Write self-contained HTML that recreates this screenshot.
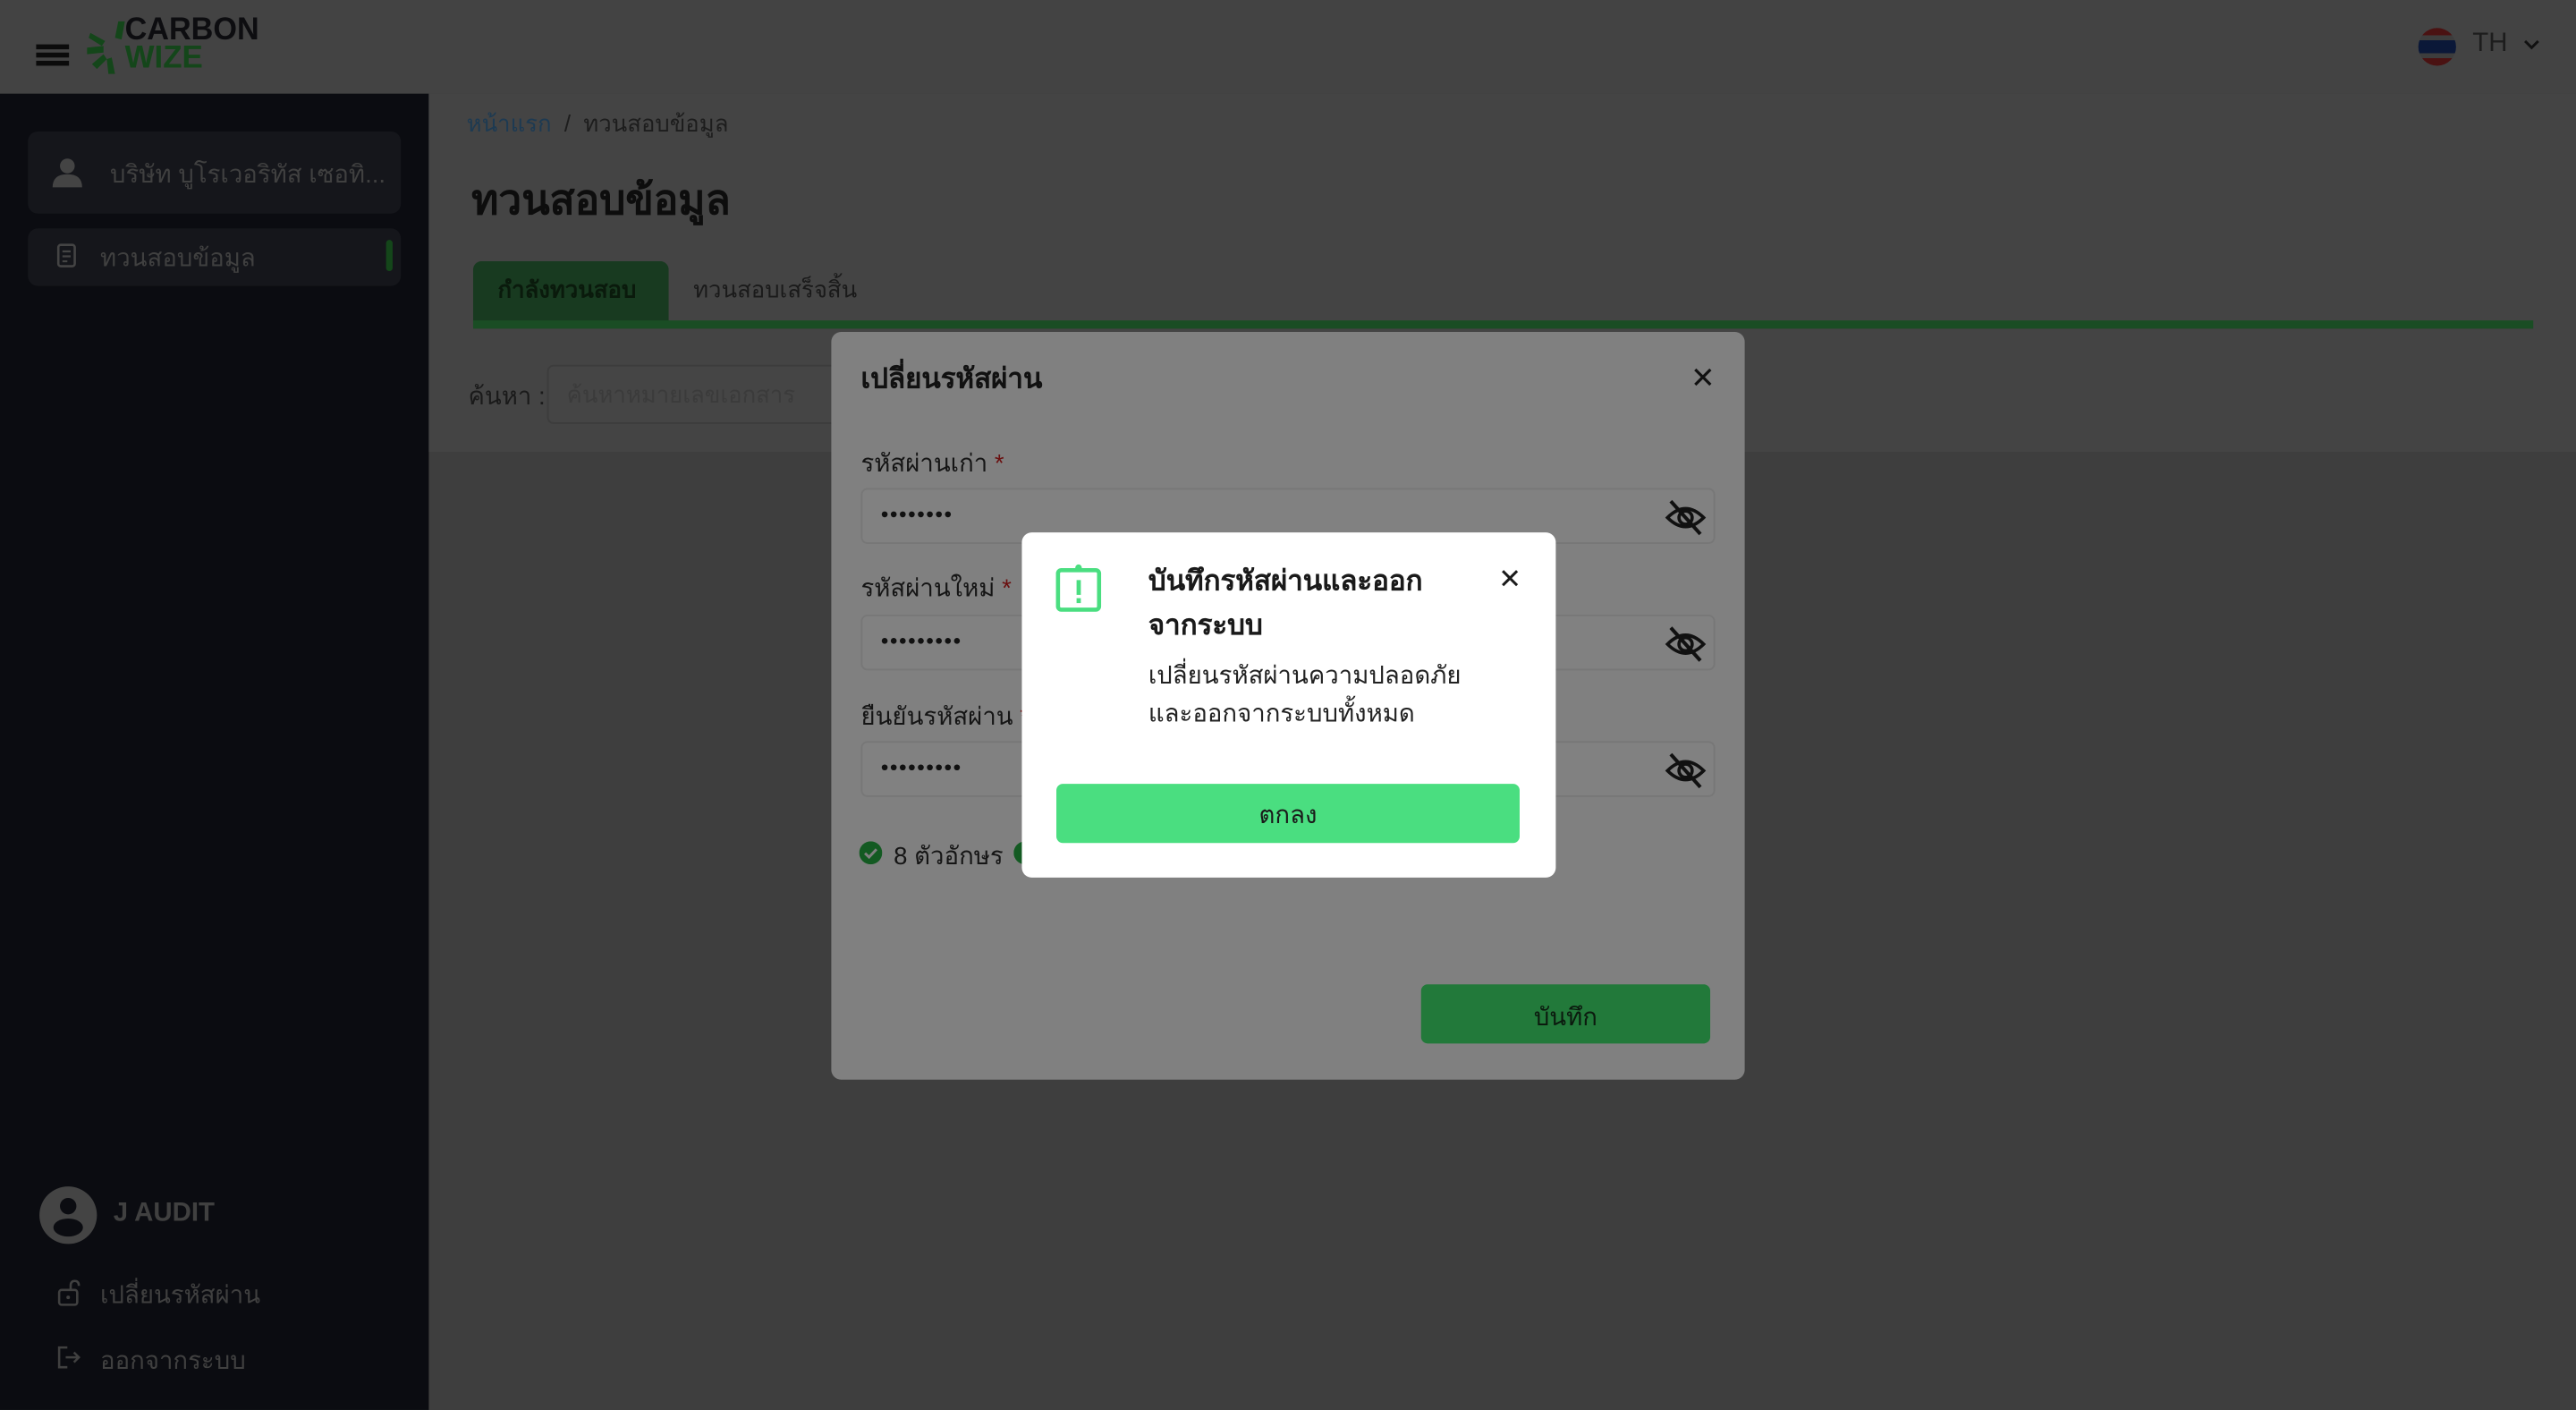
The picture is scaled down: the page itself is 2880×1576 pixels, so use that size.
<!DOCTYPE html>
<html><head><meta charset="utf-8">
<style>
*{box-sizing:border-box;margin:0;padding:0}
html,body{width:2880px;height:1576px;overflow:hidden;background:#404040}
#s{position:absolute;left:0;top:0;width:1568px;height:858px;transform:scale(1.836735);transform-origin:0 0;font-family:"Liberation Sans","Noto Sans CJK SC",sans-serif;background:#3e3e3e}
.a{position:absolute}
</style></head><body><div id="s">
<!-- header -->
<div class="a" style="left:0;top:0;width:1568px;height:57px;background:#434343"></div>
<div class="a" style="left:22px;top:27px;width:20px;height:2.5px;background:#0b0b0b;box-shadow:0 5px 0 #0b0b0b,0 10px 0 #0b0b0b"></div>
<svg class="a" style="left:52px;top:12px" width="26" height="34" viewBox="0 0 26 34"><g fill="#14461a"><path d="M18 11 L20 1 L24 1 L22 12 Z"/><path d="M1 17 L11 16 L11 20 L1 21 Z"/><path d="M3 8 L12 13 L10 16 L2 11 Z"/><path d="M4 27 L11 21 L13 24 L7 30 Z"/><path d="M13 24 L16 23 L18 33 L14 33 Z"/></g></svg>
<div class="a" style="left:76px;top:9px;font:bold 19px/20px 'Liberation Sans',sans-serif;color:#0d0d10;transform:scaleX(0.98);transform-origin:0 0">CARBON</div>
<div class="a" style="left:76px;top:26px;font:bold 19px/20px 'Liberation Sans',sans-serif;color:#14461a">WIZE</div>
<div class="a" style="left:1472px;top:17px;width:23px;height:23px;border-radius:50%;background:linear-gradient(#4a1212 0 20%,#3d3d3d 20% 33%,#0b1838 33% 67%,#3d3d3d 67% 80%,#4a1212 80%)"></div>
<div class="a" style="left:1505px;top:18px;font-size:16px;color:#1d1d1d">TH</div>
<svg class="a" style="left:1535px;top:23px" width="12" height="9"><path d="M2 2 L6 6 L10 2" stroke="#111" stroke-width="1.6" fill="none"/></svg>
<!-- sidebar -->
<div class="a" style="left:0;top:57px;width:261px;height:801px;background:#0b0c11"></div>
<div class="a" style="left:17px;top:80px;width:227px;height:50px;border-radius:6px;background:#15161b"></div>
<svg class="a" style="left:31px;top:95px" width="20" height="20"><circle cx="10" cy="6" r="4.5" fill="#444"/><path d="M1 19 Q1 11 10 11 Q19 11 19 19 Z" fill="#444"/></svg>
<div class="a" style="left:67px;top:94px;font-size:15px;color:#404040">บริษัท บูโรเวอริทัส เซอทิ...</div>
<div class="a" style="left:17px;top:139px;width:227px;height:35px;border-radius:6px;background:#15161b"></div>
<svg class="a" style="left:34px;top:148px" width="14" height="16"><rect x="1.5" y="1" width="10" height="13" rx="1.5" stroke="#444" stroke-width="1.4" fill="none"/><path d="M4 5 H9 M4 8 H9 M4 11 H7" stroke="#444" stroke-width="1.2"/></svg>
<div class="a" style="left:61px;top:145px;font-size:15px;color:#404040">ทวนสอบข้อมูล</div>
<div class="a" style="left:235px;top:146px;width:4px;height:19px;border-radius:2px;background:#14461a"></div>
<div class="a" style="left:24px;top:722px;width:35px;height:35px;border-radius:50%;background:#444"></div>
<svg class="a" style="left:24px;top:722px" width="35" height="35"><circle cx="17.5" cy="12" r="5" fill="#0b0c11"/><ellipse cx="17.5" cy="25" rx="9" ry="5.5" fill="#0b0c11"/></svg>
<div class="a" style="left:69px;top:729px;font:bold 16px/20px 'Liberation Sans',sans-serif;color:#404040">J AUDIT</div>
<svg class="a" style="left:34px;top:778px" width="16" height="18"><rect x="2" y="7" width="11" height="9" rx="1.5" stroke="#404040" stroke-width="1.4" fill="none"/><path d="M9 7 V4.5 Q9 1.5 11.5 1.5 Q14 1.5 14 4.5" stroke="#404040" stroke-width="1.4" fill="none"/><circle cx="7.5" cy="11.5" r="1.1" fill="#404040"/></svg>
<div class="a" style="left:61px;top:776px;font-size:15px;color:#404040">เปลี่ยนรหัสผ่าน</div>
<svg class="a" style="left:34px;top:818px" width="16" height="16"><path d="M7 2 H2 V14 H7 M6 8 H14 M11 5 L14 8 L11 11" stroke="#404040" stroke-width="1.4" fill="none"/></svg>
<div class="a" style="left:61px;top:816px;font-size:15px;color:#404040">ออกจากระบบ</div>
<!-- main -->
<div class="a" style="left:261px;top:57px;width:1307px;height:218px;background:#444"></div>
<div class="a" style="left:284px;top:65px;font-size:14px;color:#1d3a52">หน้าแรก <span style="color:#1d1d1d">&nbsp;/&nbsp; ทวนสอบข้อมูล</span></div>
<div class="a" style="left:287px;top:106px;font:bold 25px/32px 'Liberation Sans','Noto Sans CJK SC',sans-serif;color:#0d0d0d">ทวนสอบข้อมูล</div>
<div class="a" style="left:288px;top:159px;width:119px;height:40px;border-radius:5px 5px 0 0;background:#183a20"></div>
<div class="a" style="left:303px;top:166px;font:bold 14px/20px 'Liberation Sans','Noto Sans CJK SC',sans-serif;color:#0a1a0c">กำลังทวนสอบ</div>
<div class="a" style="left:422px;top:166px;font-size:14px;color:#1a1a1a">ทวนสอบเสร็จสิ้น</div>
<div class="a" style="left:288px;top:195px;width:1254px;height:5px;background:#1a4d24"></div>
<div class="a" style="left:285px;top:229px;font-size:15px;color:#1a1a1a">ค้นหา :</div>
<div class="a" style="left:333px;top:222px;width:180px;height:36px;border:1px solid #3c3c3c;border-radius:4px;background:#454545"></div>
<div class="a" style="left:345px;top:230px;font-size:14px;color:#3b3b3b">ค้นหาหมายเลขเอกสาร</div>
<!-- outer modal -->
<div class="a" style="left:506px;top:202px;width:556px;height:455px;border-radius:6px;background:#808080"></div>
<div class="a" style="left:524px;top:220px;font:bold 17px/22px 'Liberation Sans','Noto Sans CJK SC',sans-serif;color:#111">เปลี่ยนรหัสผ่าน</div>
<div class="a" style="left:1029px;top:220px;font-size:18px;color:#111">✕</div>
<div class="a" style="left:524px;top:270px;font-size:15px;color:#151515">รหัสผ่านเก่า <span style="color:#6a1010">*</span></div>
<div class="a" style="left:524px;top:297px;width:520px;height:34px;border:1px solid #777;border-radius:4px;background:#818181"></div>
<svg class="a" style="left:536px;top:310px" width="60" height="6"><g fill="#111"><circle cx="2.5" cy="3" r="1.8"/><circle cx="8" cy="3" r="1.8"/><circle cx="13.5" cy="3" r="1.8"/><circle cx="19" cy="3" r="1.8"/><circle cx="24.5" cy="3" r="1.8"/><circle cx="30" cy="3" r="1.8"/><circle cx="35.5" cy="3" r="1.8"/><circle cx="41" cy="3" r="1.8"/></g></svg>
<div class="a" style="left:524px;top:346px;font-size:15px;color:#151515">รหัสผ่านใหม่ <span style="color:#6a1010">*</span></div>
<div class="a" style="left:524px;top:374px;width:520px;height:34px;border:1px solid #777;border-radius:4px;background:#818181"></div>
<svg class="a" style="left:536px;top:387px" width="60" height="6"><g fill="#111"><circle cx="2.5" cy="3" r="1.8"/><circle cx="8" cy="3" r="1.8"/><circle cx="13.5" cy="3" r="1.8"/><circle cx="19" cy="3" r="1.8"/><circle cx="24.5" cy="3" r="1.8"/><circle cx="30" cy="3" r="1.8"/><circle cx="35.5" cy="3" r="1.8"/><circle cx="41" cy="3" r="1.8"/><circle cx="46.5" cy="3" r="1.8"/></g></svg>
<div class="a" style="left:524px;top:424px;font-size:15px;color:#151515">ยืนยันรหัสผ่าน <span style="color:#6a1010">*</span></div>
<div class="a" style="left:524px;top:451px;width:520px;height:34px;border:1px solid #777;border-radius:4px;background:#818181"></div>
<svg class="a" style="left:536px;top:464px" width="60" height="6"><g fill="#111"><circle cx="2.5" cy="3" r="1.8"/><circle cx="8" cy="3" r="1.8"/><circle cx="13.5" cy="3" r="1.8"/><circle cx="19" cy="3" r="1.8"/><circle cx="24.5" cy="3" r="1.8"/><circle cx="30" cy="3" r="1.8"/><circle cx="35.5" cy="3" r="1.8"/><circle cx="41" cy="3" r="1.8"/><circle cx="46.5" cy="3" r="1.8"/></g></svg>
<svg class="a" style="left:1013px;top:302px" width="26" height="26"><path d="M2 13 Q13 2 24 13 Q13 24 2 13 Z" stroke="#111" stroke-width="2" fill="none"/><circle cx="13" cy="13" r="4" stroke="#111" stroke-width="2" fill="none"/><path d="M4 3 L22 23" stroke="#111" stroke-width="2.2"/></svg>
<svg class="a" style="left:1013px;top:379px" width="26" height="26"><path d="M2 13 Q13 2 24 13 Q13 24 2 13 Z" stroke="#111" stroke-width="2" fill="none"/><circle cx="13" cy="13" r="4" stroke="#111" stroke-width="2" fill="none"/><path d="M4 3 L22 23" stroke="#111" stroke-width="2.2"/></svg>
<svg class="a" style="left:1013px;top:456px" width="26" height="26"><path d="M2 13 Q13 2 24 13 Q13 24 2 13 Z" stroke="#111" stroke-width="2" fill="none"/><circle cx="13" cy="13" r="4" stroke="#111" stroke-width="2" fill="none"/><path d="M4 3 L22 23" stroke="#111" stroke-width="2.2"/></svg>
<svg class="a" style="left:523px;top:512px" width="14" height="14"><circle cx="7" cy="7" r="7" fill="#135a22"/><path d="M3.5 7.2 L6 9.6 L10.5 4.8" stroke="#7f7f7f" stroke-width="1.6" fill="none"/></svg>
<svg class="a" style="left:617px;top:512px" width="14" height="14"><circle cx="7" cy="7" r="7" fill="#135a22"/></svg>
<div class="a" style="left:544px;top:509px;font-size:15px;color:#151515">8 ตัวอักษร</div>
<div class="a" style="left:865px;top:599px;width:176px;height:36px;border-radius:4px;background:#22793a"></div>
<div class="a" style="left:865px;top:607px;width:176px;text-align:center;font-size:15px;color:#0b1a0e">บันทึก</div>
<!-- inner modal -->
<div class="a" style="left:622px;top:324px;width:325px;height:210px;border-radius:6px;background:#fff"></div>
<svg class="a" style="left:642px;top:342px" width="30" height="32"><rect x="2" y="5" width="25" height="24" rx="2" stroke="#4ade80" stroke-width="2.5" fill="none"/><circle cx="14.5" cy="3.5" r="2" fill="#4ade80"/><rect x="13.3" y="11" width="2.6" height="9" fill="#4ade80"/><rect x="13.3" y="22" width="2.6" height="3" fill="#4ade80"/></svg>
<div class="a" style="left:699px;top:340px;width:190px;font:bold 17px/27px 'Liberation Sans','Noto Sans CJK SC',sans-serif;color:#1a1a1a">บันทึกรหัสผ่านและออก จากระบบ</div>
<div class="a" style="left:912px;top:343px;font-size:17px;color:#1a1a1a">✕</div>
<div class="a" style="left:699px;top:400px;width:200px;font-size:15px;line-height:23px;color:#222">เปลี่ยนรหัสผ่านความปลอดภัย และออกจากระบบทั้งหมด</div>
<div class="a" style="left:643px;top:477px;width:282px;height:36px;border-radius:4px;background:#4ade80"></div>
<div class="a" style="left:643px;top:484px;width:282px;text-align:center;font-size:15px;color:#1a1a1a">ตกลง</div>
</div></body></html>
